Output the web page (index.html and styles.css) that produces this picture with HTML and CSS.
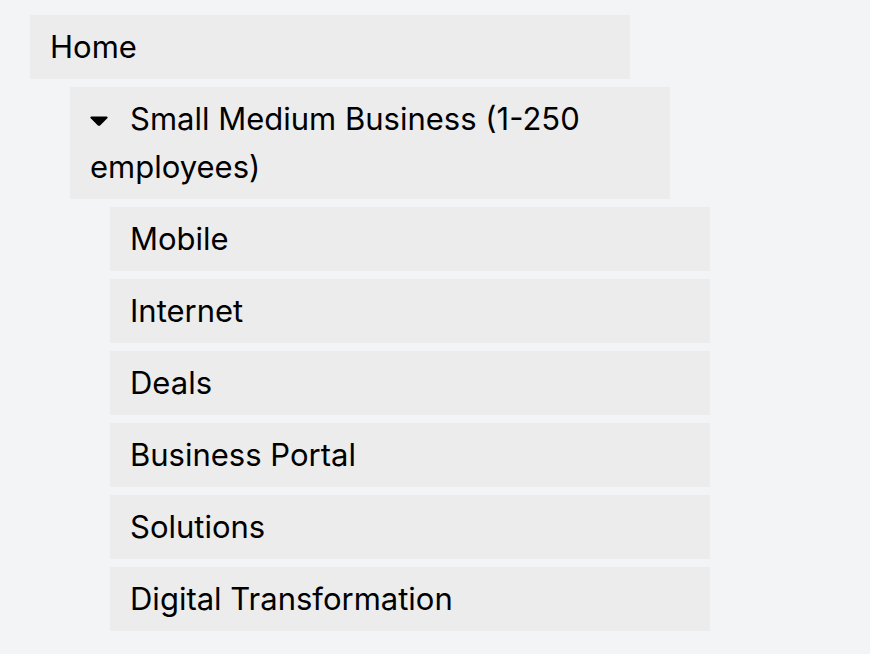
FILE: index.html
```html
<!DOCTYPE html>
<html lang="en">
<head>
    <title>Menu</title>
    <link rel="stylesheet" href="styles.css">
</head>
<body>
    <ul class="menu">
        <li><a class="menu-item" href="#">Home</a>
            <ul class="menu">
                <li>
                    <div class="menu-item open">
                        <svg class="caret" width="18" height="10" viewBox="0 0 18 10"><path d="M1.5 0.5h15c1 0 1.5 1 0.8 1.7l-7.2 7.2c-0.6 0.6-1.6 0.6-2.2 0L0.7 2.2C0 1.5 0.5 0.5 1.5 0.5z" fill="#000"/></svg>Small Medium Business (1-250 employees)
                    </div>
                    <ul class="menu">
                        <li><a class="menu-item" href="#">Mobile</a></li>
                        <li><a class="menu-item" href="#">Internet</a></li>
                        <li><a class="menu-item" href="#">Deals</a></li>
                        <li><a class="menu-item" href="#">Business Portal</a></li>
                        <li><a class="menu-item" href="#">Solutions</a></li>
                        <li><a class="menu-item" href="#">Digital Transformation</a></li>
                    </ul>
                </li>
            </ul>
        </li>
    </ul>
</body>
</html>
```

FILE: styles.css
```css
body {
    font-family: Inter, "Noto Sans", sans-serif;
    background-color: #f3f4f6;
    margin: 0;
    padding: 15px 30px;
}

.menu {
    list-style: none;
    margin: 0;
    padding: 0;
}

.menu .menu {
    padding-left: 40px;
}

.menu li {
    margin-top: 8px;
}

.menu > li:first-child {
    margin-top: 0;
}

.menu .menu > li:first-child {
    margin-top: 8px;
}

.menu-item {
    display: block;
    box-sizing: border-box;
    width: 600px;
    padding: 8px 20px;
    background-color: #ececec;
    color: #000;
    font-size: 31px;
    line-height: 48px;
    text-decoration: none;
}

.caret {
    margin-right: 22px;
    vertical-align: 4px;
}
```
